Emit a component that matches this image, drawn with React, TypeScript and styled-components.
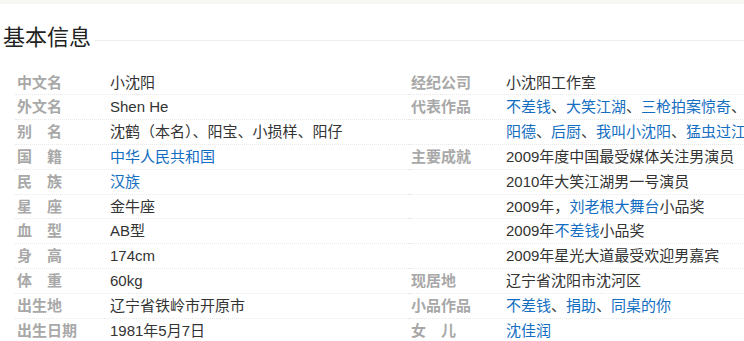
import React from "react";
import styled, { createGlobalStyle } from "styled-components";

const Global = createGlobalStyle`
  html, body { margin: 0; padding: 0; background: #fff; }
  body {
    width: 744px;
    height: 341px;
    overflow: hidden;
    font-family: "Liberation Sans", Arial, "Noto Sans CJK SC", sans-serif;
  }
`;

const Page = styled.div`
  width: 744px;
  height: 341px;
  overflow: hidden;
  background: #fff;
`;

const TopBand = styled.div`
  height: 4px;
  background: #f6f6f3;
`;

const TitleBar = styled.div`
  display: flex;
  align-items: center;
  padding: 14px 0 0 3px;
  height: 40px;
  &::after {
    content: "";
    flex: 1;
    height: 1px;
    margin: 4px 0 0 4px;
    background: #efefef;
  }
`;

const Title = styled.h2`
  margin: 0;
  font-size: 22px;
  font-weight: normal;
  line-height: 40px;
  color: #222;
  font-family: "Liberation Sans", "Noto Sans CJK SC", sans-serif;
`;

const Columns = styled.div`
  display: flex;
  margin-top: 12.6px;
  padding-left: 15px;
`;

const Column = styled.dl<{ $width: number }>`
  margin: 0;
  width: ${(p) => p.$width}px;
  flex: none;
`;

const Row = styled.div`
  display: flex;
  height: 24.8px;
  line-height: 24.8px;
  box-sizing: border-box;
  border-bottom: 1px dotted #e8e8e8;
  white-space: nowrap;
  overflow: hidden;
  font-size: 15px;
`;

const Label = styled.dt<{ $width: number }>`
  width: ${(p) => p.$width}px;
  flex: none;
  padding-left: 2px;
  box-sizing: border-box;
  color: #a8a8a8;
  font-weight: bold;
`;

const Value = styled.dd`
  margin: 0;
  color: #333;
  flex: 1;
  overflow: hidden;
`;

const Link = styled.span`
  color: #136ec2;
`;

type Seg = string | { link: string };
type Item = { label?: string; lines: Seg[][] };

const left: Item[] = [
  { label: "中文名", lines: [["小沈阳"]] },
  { label: "外文名", lines: [["Shen He"]] },
  { label: "别　名", lines: [["沈鹤（本名）、阳宝、小损样、阳仔"]] },
  { label: "国　籍", lines: [[{ link: "中华人民共和国" }]] },
  { label: "民　族", lines: [[{ link: "汉族" }]] },
  { label: "星　座", lines: [["金牛座"]] },
  { label: "血　型", lines: [["AB型"]] },
  { label: "身　高", lines: [["174cm"]] },
  { label: "体　重", lines: [["60kg"]] },
  { label: "出生地", lines: [["辽宁省铁岭市开原市"]] },
  { label: "出生日期", lines: [["1981年5月7日"]] },
];

const right: Item[] = [
  { label: "经纪公司", lines: [["小沈阳工作室"]] },
  {
    label: "代表作品",
    lines: [
      [
        { link: "不差钱" },
        "、",
        { link: "大笑江湖" },
        "、",
        { link: "三枪拍案惊奇" },
        "、",
      ],
      [
        { link: "阳德" },
        "、",
        { link: "后厨" },
        "、",
        { link: "我叫小沈阳" },
        "、",
        { link: "猛虫过江" },
      ],
    ],
  },
  {
    label: "主要成就",
    lines: [
      ["2009年度中国最受媒体关注男演员"],
      ["2010年大笑江湖男一号演员"],
      ["2009年，", { link: "刘老根大舞台" }, "小品奖"],
      ["2009年", { link: "不差钱" }, "小品奖"],
      ["2009年星光大道最受欢迎男嘉宾"],
    ],
  },
  { label: "现居地", lines: [["辽宁省沈阳市沈河区"]] },
  {
    label: "小品作品",
    lines: [[{ link: "不差钱" }, "、", { link: "捐助" }, "、", { link: "同桌的你" }]],
  },
  { label: "女　儿", lines: [[{ link: "沈佳润" }]] },
];

const renderSegs = (segs: Seg[]) =>
  segs.map((s, i) =>
    typeof s === "string" ? (
      <React.Fragment key={i}>{s}</React.Fragment>
    ) : (
      <Link key={i}>{s.link}</Link>
    )
  );

const InfoColumn: React.FC<{ items: Item[]; width: number; labelWidth: number }> = ({
  items,
  width,
  labelWidth,
}) => (
  <Column $width={width}>
    {items.map((item, i) =>
      item.lines.map((line, j) => (
        <Row key={`${i}-${j}`}>
          <Label $width={labelWidth}>{j === 0 ? item.label : ""}</Label>
          <Value>{renderSegs(line)}</Value>
        </Row>
      ))
    )}
  </Column>
);

export default function App() {
  return (
    <Page>
      <Global />
      <TopBand />
      <TitleBar>
        <Title>基本信息</Title>
      </TitleBar>
      <Columns>
        <InfoColumn items={left} width={394} labelWidth={95} />
        <InfoColumn items={right} width={400} labelWidth={97} />
      </Columns>
    </Page>
  );
}
